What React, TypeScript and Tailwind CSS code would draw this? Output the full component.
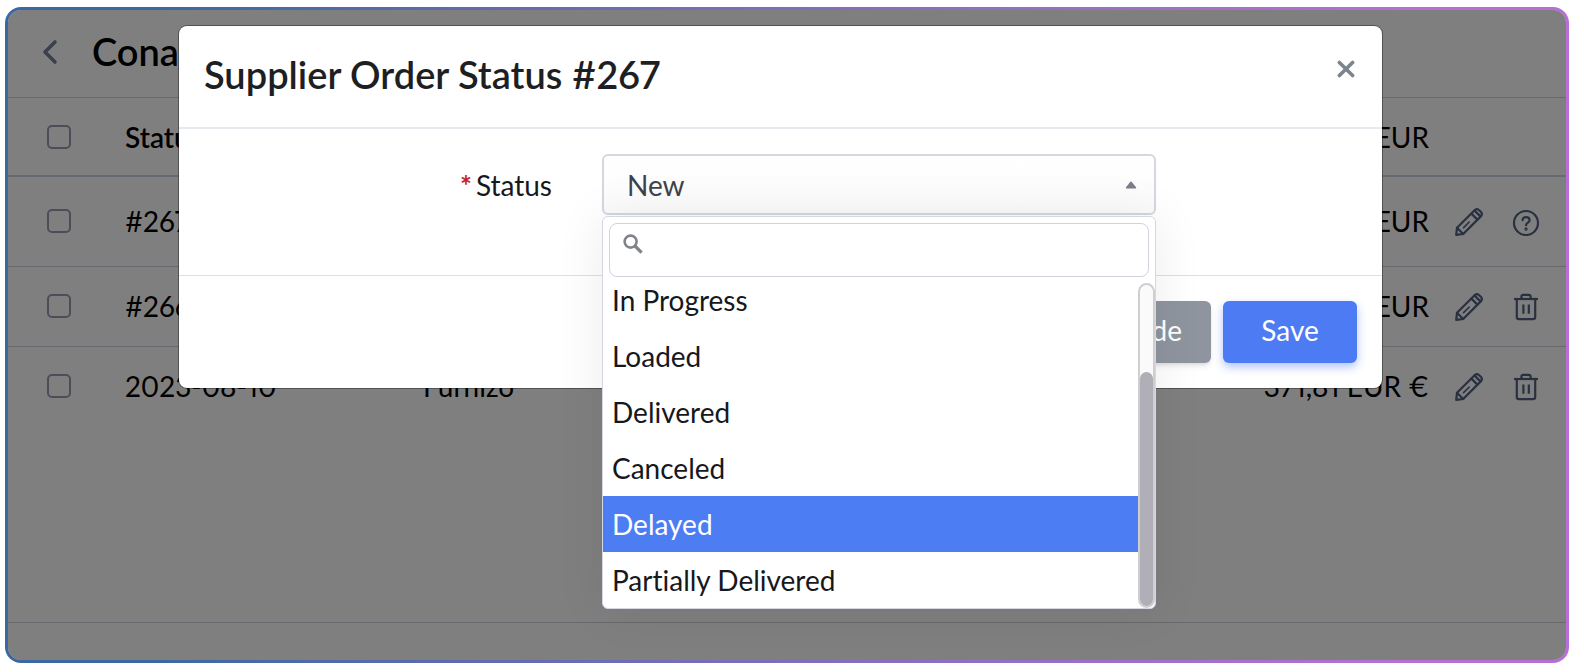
import { useState } from 'react';

const STATUSES = ['New', 'In Progress', 'Loaded', 'Delivered', 'Canceled', 'Delayed', 'Partially Delivered'];

const ORDERS = [
    { id: '267', label: '#267', supplier: '', amount: 'EUR', locked: true, height: 'h-[90px]' },
    { id: '266', label: '#266', supplier: '', amount: 'EUR', locked: false, height: 'h-20' },
    { id: '265', label: '2023-08-10', supplier: 'Furnizo', amount: '371,81 EUR €', locked: false, height: 'h-20' },
];

function PencilIcon() {
    return (
        <svg width="28" height="28" viewBox="0 0 28 28" fill="none" stroke="currentColor" strokeWidth="2.2" strokeLinejoin="round" strokeLinecap="round">
            <path d="M1.2 26.8 L2 19.8 L19.6 2.2 C21 .9 22.8 .9 24.2 2.2 L25.8 3.8 C27.1 5.2 27.1 7 25.8 8.4 L8.2 26 Z" />
            <path d="M2 19.8 L8.2 26" />
            <path d="M16.4 5.6 L22.4 11.6" />
            <path d="M19.6 2.6 L25.4 8.4" />
            <path d="M8.6 19.6 L14.2 14" strokeWidth="1.6" />
        </svg>
    );
}

function TrashIcon() {
    return (
        <svg width="28" height="28" viewBox="0 0 28 28" fill="none" stroke="currentColor" strokeWidth="2.2" strokeLinejoin="round">
            <path d="M2 6 H26" />
            <path d="M9.4 6 V3.6 C9.4 2.3 10 1.8 11.2 1.8 H16.8 C18 1.8 18.6 2.3 18.6 3.6 V6" />
            <path d="M4.8 6 V24 C4.8 25.5 5.6 26.2 7 26.2 H21 C22.4 26.2 23.2 25.5 23.2 24 V6" />
            <path d="M11.4 11.6 V20.8 M16.8 11.6 V20.8" />
        </svg>
    );
}

function HelpIcon() {
    return (
        <svg width="28" height="28" viewBox="0 0 28 28" fill="none" stroke="currentColor" strokeWidth="2.2" strokeLinecap="round" strokeLinejoin="round">
            <circle cx="14" cy="15" r="12" />
            <path d="M10.6 12.2 C10.6 10.2 12.1 9.2 14 9.2 C16 9.2 17.6 10.3 17.6 12.2 C17.6 14.6 14 14.6 14 17.2" />
            <circle cx="14" cy="21" r=".6" fill="currentColor" />
        </svg>
    );
}

function RowCheckbox({ label }: { label: string }) {
    return (
        <input
            type="checkbox"
            aria-label={label}
            className="block ml-[39px] w-6 h-6 appearance-none rounded-[5px] border-2 border-[#989bb0] checked:bg-blue-500"
        />
    );
}

function OrdersPage() {
    return (
        <div className="flex flex-col flex-1 bg-white">
            <header className="h-[88px] pb-1 flex items-center border-b border-[#ccd6e4]">
                <button type="button" aria-label="Back" className="ml-[33px] text-[#75829a]">
                    <svg width="18" height="26" viewBox="0 0 18 26" fill="none" stroke="currentColor" strokeWidth="3.6" strokeLinecap="round" strokeLinejoin="round">
                        <path d="M14 3 L4 13 L14 23" />
                    </svg>
                </button>
                <h1 className="ml-[33px] text-[38px] font-semibold text-black">Conal</h1>
            </header>

            <table className="w-full table-fixed border-collapse text-[28px] leading-8 text-black">
                <colgroup>
                    <col className="w-[117px]" />
                    <col className="w-[298px]" />
                    <col />
                    <col className="w-[220px]" />
                    <col className="w-[137px]" />
                </colgroup>
                <thead>
                    <tr className="h-[78px] border-b-2 border-[#ccd6e4]">
                        <th><RowCheckbox label="Select all orders" /></th>
                        <th className="text-left font-semibold">Status</th>
                        <th></th>
                        <th className="text-right font-normal">EUR</th>
                        <th></th>
                    </tr>
                </thead>
                <tbody>
                    {ORDERS.map((order) => (
                        <tr key={order.id} className={`${order.height} border-b border-[#ccd2e0] last:border-b-0`}>
                            <td><RowCheckbox label={`Select order ${order.label}`} /></td>
                            <td>{order.label}</td>
                            <td>{order.supplier}</td>
                            <td className="text-right whitespace-nowrap">{order.amount}</td>
                            <td>
                                <div className="flex gap-[29px] pl-[26px] pt-px text-[#526080]">
                                    <button type="button" aria-label="Edit"><PencilIcon /></button>
                                    {order.locked ? (
                                        <button type="button" aria-label="Help"><HelpIcon /></button>
                                    ) : (
                                        <button type="button" aria-label="Delete"><TrashIcon /></button>
                                    )}
                                </div>
                            </td>
                        </tr>
                    ))}
                </tbody>
            </table>

            <footer className="mt-auto h-[38px] border-t border-[#d0d2dc]" />
        </div>
    );
}

interface StatusDropdownProps {
    current: string;
    active: string;
    onPick: (status: string) => void;
}

function StatusDropdown({ current, active, onPick }: StatusDropdownProps) {
    const [query, setQuery] = useState('');
    const options = STATUSES.filter((s) => s !== current && s.toLowerCase().includes(query.toLowerCase()));

    return (
        <div className="absolute left-0 right-0 top-full z-10 bg-white border border-[#d5d8e2] rounded-md shadow-[0_0_50px_rgba(0,0,0,0.08)] overflow-hidden">
            <div className="relative p-[6px]">
                <svg className="absolute left-5 top-[17px] text-[#808488]" width="20" height="20" viewBox="0 0 20 20" fill="none" stroke="currentColor" strokeWidth="2.6">
                    <circle cx="7.6" cy="7.6" r="6" />
                    <path d="M12 12 L18.6 18.6" strokeWidth="3.2" />
                </svg>
                <input
                    type="text"
                    aria-label="Search status"
                    value={query}
                    onChange={(e) => setQuery(e.target.value)}
                    className="block w-full h-[54px] pl-12 pr-3 border border-[#d0d3de] rounded-lg text-[28px] outline-none"
                />
            </div>
            <div className="flex h-[325px]">
                <ul role="listbox" aria-label="Status" className="flex-1 flex flex-col justify-end overflow-hidden">
                    {options.map((status) => (
                        <li
                            key={status}
                            role="option"
                            aria-selected={status === active}
                            onClick={() => onPick(status)}
                            className={`h-14 shrink-0 flex items-center px-[9px] cursor-pointer ${status === active ? 'bg-[#4d7df2] text-white' : 'text-[#16181c]'}`}
                        >
                            {status}
                        </li>
                    ))}
                </ul>
                {/* Scrollbar */}
                <div className="w-[17px] flex flex-col justify-end bg-[#fafafa] border-2 border-[#cfcfd2] rounded-full">
                    <div className="h-[234px] bg-[#b0aeb6] rounded-full" />
                </div>
            </div>
        </div>
    );
}

function StatusModal() {
    const [value, setValue] = useState('New');
    const [active, setActive] = useState('Delayed');

    return (
        <div role="dialog" aria-labelledby="status-title" className="w-full bg-white rounded-lg shadow-[0_0_0_1px_rgba(0,0,0,0.35)] text-[28px] leading-8">
            {/* Header */}
            <div className="h-[103px] pl-[25px] pr-[27px] flex justify-between border-b-2 border-[#e6eaef]">
                <h2 id="status-title" className="pt-[26px] text-[38px] leading-[44px] font-semibold text-[#1d1f23]">Supplier Order Status #267</h2>
                <button type="button" aria-label="Close" className="mt-[34px] h-[18px] text-[#7b848f]">
                    <svg width="18" height="18" viewBox="0 0 18 18" fill="none" stroke="currentColor" strokeWidth="3.6" strokeLinecap="round">
                        <path d="M2.4 2.4 L15.6 15.6 M15.6 2.4 L2.4 15.6" />
                    </svg>
                </button>
            </div>

            {/* Body */}
            <div className="h-[147px] pt-[25px] pr-[226px] flex border-b border-[#dcdfe8]">
                <label htmlFor="status" className="w-[373px] shrink-0 h-[62px] flex items-center justify-end gap-1 text-[#16181c]">
                    <span className="text-[#c4242c] font-bold">*</span>
                    Status
                </label>
                <div className="relative flex-1 ml-[50px] h-[62px]">
                    <select
                        id="status"
                        value={value}
                        onChange={(e) => setValue(e.target.value)}
                        className="block w-full h-[61px] pl-[23px] pr-12 appearance-none bg-gradient-to-b from-white to-[#fbfbfb] border-2 border-[#d3d7de] rounded-md text-[#3f4249] outline-none"
                    >
                        {STATUSES.map((status) => (
                            <option key={status}>{status}</option>
                        ))}
                    </select>
                    <svg className="absolute right-[19px] top-[27px] text-[#7b7e8a] pointer-events-none" width="12" height="8" viewBox="0 0 12 8" fill="currentColor">
                        <path d="M1.4 7.4 Q.3 7.2 1 6.2 L5.2 1 Q6 .2 6.8 1 L11 6.2 Q11.7 7.2 10.6 7.4 Z" />
                    </svg>
                    <StatusDropdown current={value} active={active} onPick={setActive} />
                </div>
            </div>

            {/* Actions */}
            <div className="h-28 pt-[25px] pr-[25px] flex items-start justify-end gap-3">
                <button type="button" className="h-[62px] px-[29px] pb-1 bg-[#8f959f] text-white rounded-md shadow-md">Hide</button>
                <button type="button" className="h-[62px] w-[134px] pb-1 bg-[#4d7bf3] text-white rounded-md shadow-[0_4px_10px_rgba(77,123,243,0.45)]">Save</button>
            </div>
        </div>
    );
}

export default function App() {
    return (
        <div className="min-h-screen flex bg-white pt-[7px] pb-[9px] pl-[5px] pr-[15px] font-['Lato','Liberation_Sans',sans-serif] proportional-nums [font-variant-ligatures:no-common-ligatures]">
            <div className="flex-1 flex rounded-2xl p-[3px] bg-gradient-to-r from-[#3c68a2] from-10% to-[#b66fd6] to-90%">
                <div className="relative flex-1 flex rounded-[13px] overflow-hidden">
                    <OrdersPage />
                    <div className="absolute inset-0 bg-black/50 pt-4 pl-[171px] pr-[184px]">
                        <StatusModal />
                    </div>
                </div>
            </div>
        </div>
    );
}
